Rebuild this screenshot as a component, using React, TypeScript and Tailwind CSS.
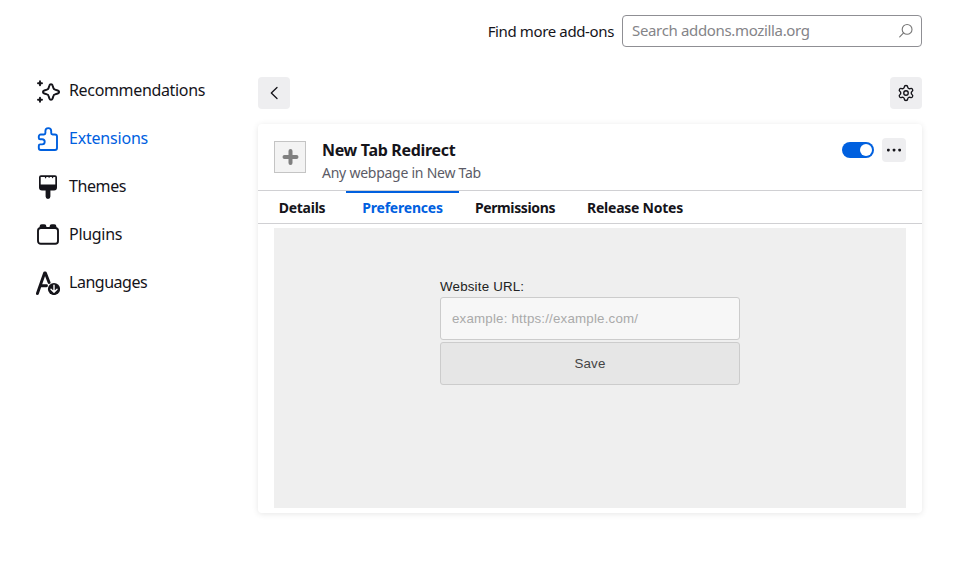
import type { ReactNode } from "react";
import { Settings } from "lucide-react";

const stroke = {
  fill: "none",
  stroke: "currentColor",
  strokeWidth: 2,
  strokeLinecap: "round" as const,
  strokeLinejoin: "round" as const,
};

function SparkleIcon() {
  return (
    <svg className="size-6" viewBox="0 0 24 24" {...stroke}>
      <path d="M15 5.200c.7 0 1.300.4 1.500 1.100l.9 2.700c.2.800.800 1.400 1.600 1.600l2.700.9c1.800.6 1.800 2.400 0 3l-2.700.9c-.8.2-1.400.8-1.600 1.600l-.9 2.700c-.5 1.500-2.500 1.500-3 0l-.9-2.700c-.2-.8-.8-1.400-1.600-1.600l-2.700-.9c-1.800-.6-1.800-2.400 0-3l2.700-.9c.8-.2 1.400-.8 1.600-1.600l.9-2.700c.2-.7.800-1.100 1.500-1.100z" />
      <path d="M4 2.300v4M2 4.300h4M4 18.700v4M2 20.700h4" strokeWidth="1.900" />
    </svg>
  );
}

function PuzzleIcon() {
  return (
    <svg className="size-6" viewBox="0 0 24 24" {...stroke}>
      <path d="M4.700 7.500H8c.9 0 1.400-.5 1.400-1.400V4a2.900 2.900 0 0 1 5.800 0v2.100c0 .9.500 1.400 1.400 1.400H19a2 2 0 0 1 2 2V21a2 2 0 0 1-2 2H4.800a2 2 0 0 1-2-2v-2.300c0-.8.500-1.300 1.300-1.300h2a2.600 2.600 0 0 0 0-5.200h-2c-.8 0-1.300-.5-1.300-1.300V9.400a1.900 1.900 0 0 1 1.900-1.900z" strokeWidth="1.900" />
    </svg>
  );
}

function BrushIcon() {
  return (
    <svg className="size-6" viewBox="0 0 24 24" fill="currentColor">
      <path fillRule="evenodd" d="M5 .2h14a2 2 0 0 1 2 2v10.300a3 3 0 0 1-3 3h-3.600V21.500a2.400 2.400 0 0 1-4.800 0v-6H6a3 3 0 0 1-3-3V2.200a2 2 0 0 1 2-2zM4.700 2v7.500h14.600V2h-1.800l-.9 1.500L15.700 2H14l-.9 1-.9-1h-1.700l-.9 1.700L8.700 2z" />
    </svg>
  );
}

function PluginIcon() {
  return (
    <svg className="size-6" viewBox="0 0 24 24" {...stroke}>
      <rect x="2" y="5" width="20" height="15.800" rx="2.800" strokeWidth="1.900" />
      <path d="M3.600 5.500V3.400A2.200 2.200 0 0 1 5.800 1.200h2.400a2.200 2.200 0 0 1 2.200 2.200v2.100zM13.600 5.500V3.400a2.200 2.200 0 0 1 2.200-2.200h2.400a2.200 2.200 0 0 1 2.200 2.200v2.100z" fill="currentColor" stroke="none" />
    </svg>
  );
}

function LanguageIcon() {
  return (
    <svg className="size-6" viewBox="0 0 24 24" {...stroke}>
      <path d="M1.400 22.500L8.600 2h.8l3.700 9.500M5.500 14.800h5" strokeWidth="2.900" />
      <circle cx="18" cy="18" r="6.100" fill="currentColor" stroke="none" />
      <path d="M18 14.300v6.900M15 18.300l3 3 3-3" stroke="#fff" strokeWidth="1.400" />
    </svg>
  );
}

function NavItem({ icon, label, spacing, active }: { icon: ReactNode; label: string; spacing: string; active?: boolean }) {
  return (
    <a className={`flex h-12 items-center gap-[9px] ${active ? "text-[#0060df]" : "text-[#15141a]"}`}>
      {icon}
      <span className={`-mt-0.5 whitespace-nowrap text-[16px] leading-6 ${spacing}`}>{label}</span>
    </a>
  );
}

function Tab({ label, width, spacing, active }: { label: string; width: string; spacing: string; active?: boolean }) {
  return (
    <button className={`h-8 border-t-2 text-center text-[14px] font-bold leading-[30px] whitespace-nowrap ${width} ${spacing} ${active ? "border-[#0060df] text-[#0060df]" : "border-transparent text-[#15141a]"}`}>
      {label}
    </button>
  );
}

export default function App() {
  return (
    <div className="flex h-[566px] w-[957px] flex-col overflow-hidden bg-white font-['Noto_Sans',sans-serif] text-[#15141a]">
      <header className="flex h-[67px] items-start justify-end pr-[35px] pt-[15px]">
        <label className="mr-2 whitespace-nowrap text-[15px] leading-[33px] tracking-[-0.37px]">Find more add-ons</label>
        <div className="flex h-8 w-[300px] items-center justify-between rounded-[4px] border border-[#8f8f94] pl-[9px] pr-[7px] text-[#848488]">
          <span className="-mt-[3px] whitespace-nowrap text-[15px] leading-[30px] tracking-[-0.34px]">Search addons.mozilla.org</span>
          <svg className="size-4" viewBox="0 0 16 16" fill="none" stroke="#777" strokeWidth="1.100" strokeLinecap="round">
            <circle cx="9.100" cy="6.400" r="4.900" />
            <path d="M5.600 9.900L1.700 13.800" />
          </svg>
        </div>
      </header>
      <div className="flex">
        <nav className="w-[258px] shrink-0 pl-9">
          <NavItem icon={<SparkleIcon />} label="Recommendations" spacing="tracking-[-0.34px]" />
          <NavItem icon={<PuzzleIcon />} label="Extensions" spacing="tracking-[-0.2px]" active />
          <NavItem icon={<BrushIcon />} label="Themes" spacing="tracking-[-0.4px]" />
          <NavItem icon={<PluginIcon />} label="Plugins" spacing="tracking-[-0.3px]" />
          <NavItem icon={<LanguageIcon />} label="Languages" spacing="tracking-[-0.48px]" />
        </nav>
        <main className="w-[664px] pt-[10px]">
          <div className="flex justify-between">
            <button className="grid size-8 place-items-center rounded-[4px] bg-[#eeeef0]">
              <svg className="size-4" viewBox="0 0 16 16" fill="none" stroke="#15141a" strokeWidth="1.300" strokeLinecap="round" strokeLinejoin="round">
                <path d="M11 2.500L5.300 8L11 13.500" />
              </svg>
            </button>
            <button className="grid size-8 place-items-center rounded-[4px] bg-[#eeeef0]">
              <Settings size={18} strokeWidth={1.8} />
            </button>
          </div>
          <section className="mt-[15px] h-[389px] rounded-[4px] bg-white shadow-[0_1px_6px_rgba(12,12,13,0.1)]">
            <div className="flex h-[66px] px-4">
              <div className="mt-[17px] grid size-8 place-items-center border border-[#c4c4c4] bg-[#f3f3f3]">
                <svg className="size-[18px]" viewBox="0 0 18 18" stroke="#808080" strokeWidth="4" strokeLinecap="round">
                  <path d="M9.500 3v12M3.500 9h12" />
                </svg>
              </div>
              <div className="ml-4 mt-[14px] flex-1">
                <h1 className="whitespace-nowrap text-[16px] font-bold leading-6 tracking-[-0.32px]">New Tab Redirect</h1>
                <p className="whitespace-nowrap text-[14px] leading-[21px] tracking-[-0.25px] text-[#5b5b66]">Any webpage in New Tab</p>
              </div>
              <div className="mt-[18px] flex h-4 w-8 items-center justify-end rounded-full bg-[#0060df] pr-[2px]">
                <span className="size-3 rounded-full bg-white" />
              </div>
              <button className="ml-2 mt-[14px] flex size-6 items-center justify-center rounded-[4px] bg-[#eeeef0]">
                <svg className="size-4" viewBox="0 0 16 16" fill="#15141a">
                  <rect x="1" y="6.700" width="2.700" height="2.700" rx=".8" />
                  <rect x="6.700" y="6.700" width="2.700" height="2.700" rx=".8" />
                  <rect x="12.300" y="6.700" width="2.700" height="2.700" rx=".8" />
                </svg>
              </button>
            </div>
            <div className="flex h-[34px] border-y border-[#d0d0d3] pl-1">
              <Tab label="Details" width="w-[80px]" spacing="tracking-[-0.25px]" />
              <div className="ml-1 flex">
                <Tab label="Preferences" width="w-[113px]" spacing="tracking-[-0.22px]" active />
              </div>
              <Tab label="Permissions" width="w-[112px]" spacing="tracking-[-0.37px]" />
              <Tab label="Release Notes" width="w-[128px]" spacing="tracking-[-0.25px]" />
            </div>
            <div className="mx-4 mt-1 flex h-[280px] justify-center bg-[#efefef] pt-[50px] font-['Liberation_Sans',Arial,sans-serif] text-[13.333px] tracking-[0.19px]">
              <div className="w-[300px]">
                <label className="block h-[19px] leading-[17px] text-[#222]">Website URL:</label>
                <div className="h-[43px] rounded-[3px] border border-[#ccc] bg-[#f7f7f7] pl-[11px] leading-[41px] text-[#aaa]">example: https://example.com/</div>
                <button className="mt-[2px] block h-[43px] w-full rounded-[3px] border border-[#ccc] bg-[#e6e6e6] text-center leading-[41px] text-[#444]">Save</button>
              </div>
            </div>
          </section>
        </main>
      </div>
    </div>
  );
}
